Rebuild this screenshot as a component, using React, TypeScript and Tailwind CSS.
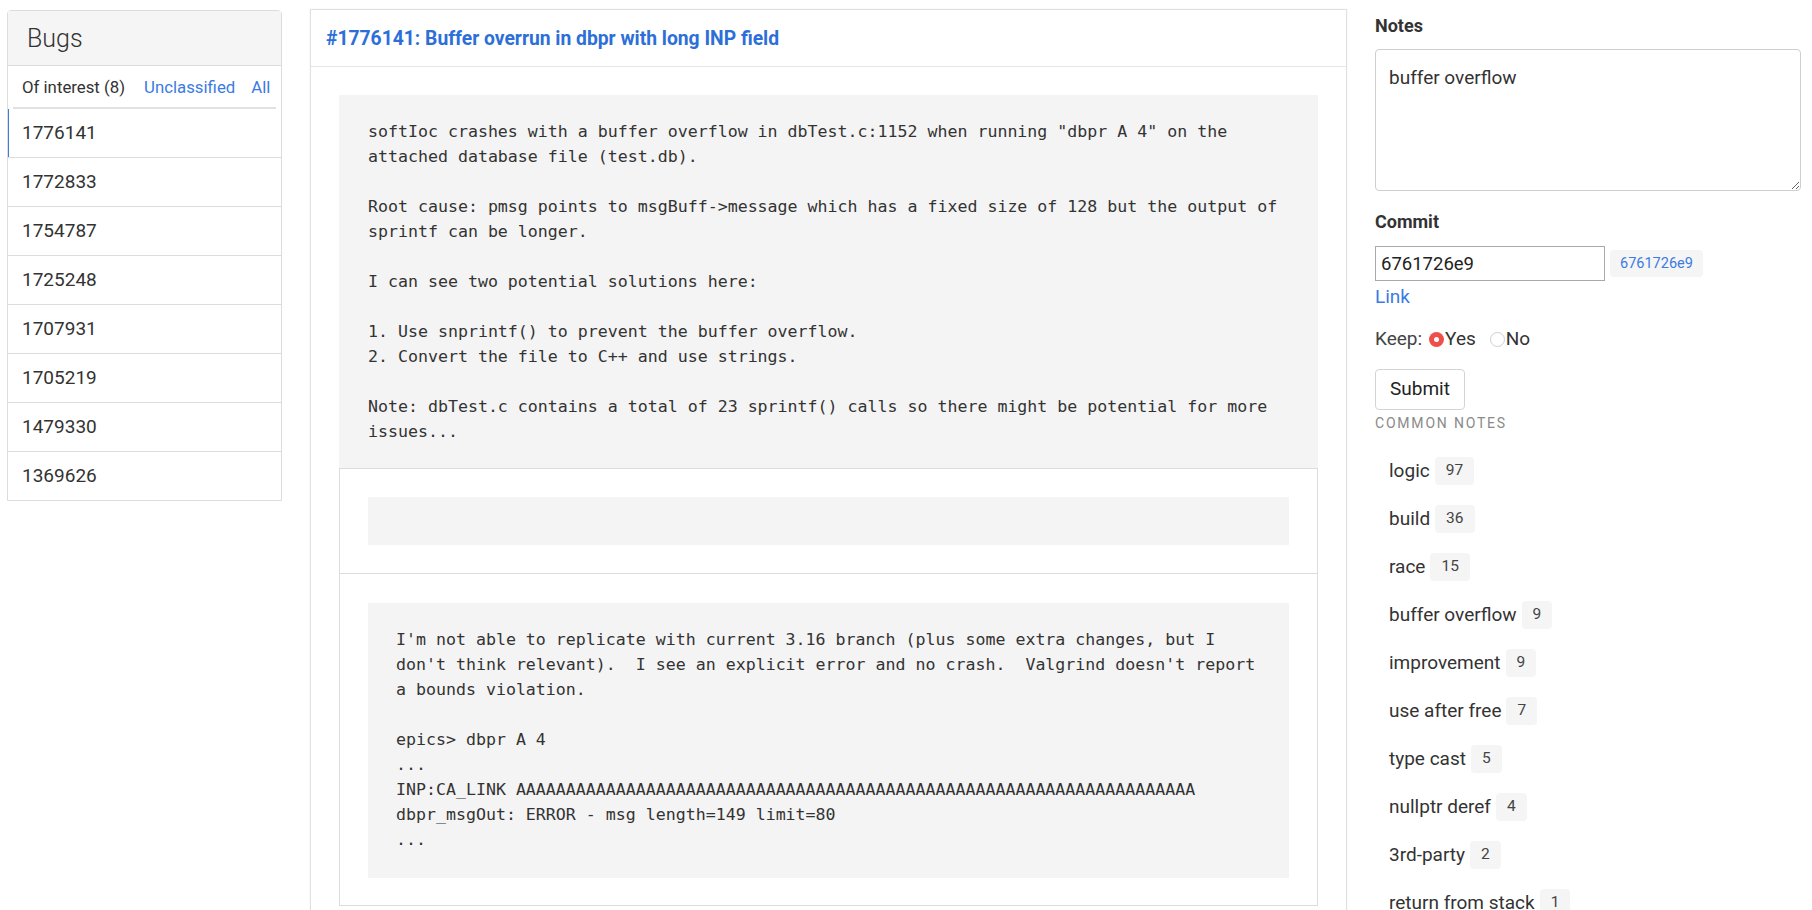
import React from "react";

const bugIds = [
  "1776141",
  "1772833",
  "1754787",
  "1725248",
  "1707931",
  "1705219",
  "1479330",
  "1369626",
];

const commonNotes: [string, number][] = [
  ["logic", 97],
  ["build", 36],
  ["race", 15],
  ["buffer overflow", 9],
  ["improvement", 9],
  ["use after free", 7],
  ["type cast", 5],
  ["nullptr deref", 4],
  ["3rd-party", 2],
  ["return from stack", 1],
];

const description = `softIoc crashes with a buffer overflow in dbTest.c:1152 when running "dbpr A 4" on the
attached database file (test.db).

Root cause: pmsg points to msgBuff->message which has a fixed size of 128 but the output of
sprintf can be longer.

I can see two potential solutions here:

1. Use snprintf() to prevent the buffer overflow.
2. Convert the file to C++ and use strings.

Note: dbTest.c contains a total of 23 sprintf() calls so there might be potential for more
issues...`;

const reply = `I'm not able to replicate with current 3.16 branch (plus some extra changes, but I
don't think relevant).  I see an explicit error and no crash.  Valgrind doesn't report
a bounds violation.

epics> dbpr A 4
...
INP:CA_LINK ${"A".repeat(68)}
dbpr_msgOut: ERROR - msg length=149 limit=80
...`;

const mono = "font-['DejaVu_Sans_Mono',monospace] text-[16.6px] leading-[25px] text-[#333]";

function BugList() {
  return (
    <div className="mt-[3px] w-[275px] shrink-0 rounded-t-[4px] border border-[#dcdcdc]">
      <div className="flex h-[55px] items-center border-b border-[#dcdcdc] bg-[#f5f5f5] pl-[19px]">
        <h2 className="pt-[2px] text-[25px] font-light text-[#333]">Bugs</h2>
      </div>
      <div className="px-[5px]">
        <div className="flex h-[43px] items-stretch overflow-hidden whitespace-nowrap border-b-2 border-[#e2e2e2] pt-[2px] text-[16.8px]">
          <span className="-mb-[2px] flex items-center border-b-2 border-[#333] pr-[11px] pl-[9px] text-[#333]">
            Of interest (8)
          </span>
          <span className="flex items-center px-[8px] text-[#3b7be2]">Unclassified</span>
          <span className="flex items-center px-[8px] text-[#3b7be2]">All</span>
        </div>
      </div>
      {bugIds.map((id, i) => (
        <div
          key={id}
          className={`flex items-center pl-[14px] text-[19px] text-[#333] ${
            i > 0 ? "h-[49px] border-t border-[#dcdcdc]" : "h-[48px] pt-[1px]"
          } ${i === 0 ? "shadow-[inset_1px_0_0_#3b7be2]" : ""}`}
        >
          {id}
        </div>
      ))}
    </div>
  );
}

function BugDetail() {
  return (
    <div className="mt-[2px] w-[1037px] shrink-0 border border-[#e0e0e0] shadow-[0_0_2px_rgba(0,0,0,0.06)]">
      <div className="flex h-[57px] items-center border-b border-[#e6e6e6] px-[15px]">
        <h1 className="pt-[2px] text-[19.3px] font-bold text-[#2d6fd8]">
          #1776141: Buffer overrun in dbpr with long INP field
        </h1>
      </div>
      <div className="p-[28px]">
        <pre className={`${mono} whitespace-pre-wrap bg-[#f4f4f4] px-[29px] pt-[24px] pb-[24px]`}>
          {description}
        </pre>
        <div className="border border-[#dcdcdc]">
          <div className="p-[28px]">
            <pre className={`${mono} h-[48px] bg-[#f4f4f4]`} />
          </div>
          <div className="border-t border-[#dcdcdc] px-[28px] pt-[29px] pb-[27px]">
            <pre className={`${mono} whitespace-pre-wrap bg-[#f4f4f4] px-[28px] pt-[24px] pb-[26px]`}>
              {reply}
            </pre>
          </div>
        </div>
      </div>
    </div>
  );
}

function Sidebar() {
  return (
    <div className="w-[426px] shrink-0 pt-[7px] text-[#333]">
      <div className="text-[18px] leading-[24px] font-bold">Notes</div>
      <textarea
        defaultValue="buffer overflow"
        className="mt-[11px] block h-[142px] w-full rounded-[4px] border border-[#cfcfcf] px-[13px] pt-[14px] pb-[10px] text-[19px] leading-[28px] text-[#333] outline-none"
      />
      <div className="mt-[19px] text-[18px] leading-[24px] font-bold">Commit</div>
      <div className="mt-[12px] flex items-center gap-[5px]">
        <input
          defaultValue="6761726e9"
          className="h-[35px] w-[230px] border border-[#a9a9a9] px-[5px] text-[18.5px] text-[#222] outline-none"
        />
        <span className="flex h-[27px] items-center rounded-[4px] bg-[#f5f5f5] px-[10px] text-[14.5px] text-[#3b7be2]">
          6761726e9
        </span>
      </div>
      <a className="mt-[4px] block text-[19px] leading-[24px] text-[#3b7be2]">Link</a>
      <div className="mt-[18px] flex h-[24px] items-center text-[19px]">
        <span className="text-[#444]">Keep:</span>
        <span className="ml-[7px] flex h-[15px] w-[15px] items-center justify-center rounded-full bg-[#ef4f4a]">
          <span className="h-[5px] w-[5px] rounded-full bg-white" />
        </span>
        <span className="ml-px">Yes</span>
        <span className="ml-[14px] h-[15px] w-[15px] rounded-full border border-[#cfcfcf] bg-white" />
        <span className="ml-px">No</span>
      </div>
      <button className="mt-[18px] h-[41px] rounded-[4px] border border-[#d4d4d4] bg-white px-[14px] text-[19px] text-[#222]">
        Submit
      </button>
      <div className="mt-[5px] text-[14px] leading-[16px] tracking-[1.8px] text-[#8a8a8a]">
        COMMON NOTES
      </div>
      <ul className="mt-[16px] pl-[14px]">
        {commonNotes.map(([label, count]) => (
          <li key={label} className="flex h-[48px] items-center gap-[5px]">
            <span className="text-[19px] text-[#333]">{label}</span>
            <span className="flex h-[28px] items-center rounded-[4px] bg-[#f5f5f5] px-[11px] text-[15.5px] text-[#444]">
              {count}
            </span>
          </li>
        ))}
      </ul>
    </div>
  );
}

export default function App() {
  return (
    <div className="flex h-[910px] items-start gap-[28px] overflow-hidden bg-white pt-[7px] pl-[7px] font-['Roboto',sans-serif]">
      <BugList />
      <BugDetail />
      <Sidebar />
    </div>
  );
}
